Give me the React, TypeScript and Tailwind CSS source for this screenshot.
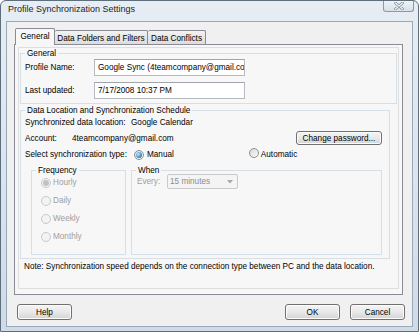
import React from "react"

function Radio({ checked, disabled }: { checked?: boolean; disabled?: boolean }) {
  return (
    <span
      className={`inline-flex h-[10px] w-[10px] shrink-0 items-center justify-center rounded-full border ${
        disabled
          ? "border-[#c9c9c9] bg-[#f3f3f3]"
          : "border-[#8f8f8f] bg-linear-to-br from-[#d9d9d9] to-[#fbfbfb]"
      }`}
    >
      {checked && (
        <span
          className={`h-[6px] w-[6px] rounded-full ${
            disabled ? "bg-[#c2c2c2]" : "bg-[radial-gradient(circle_at_35%_35%,#bfeaff,#2a7fc8_70%,#175a9a)]"
          }`}
        />
      )}
    </span>
  )
}

function Btn({ children, className = "" }: { children: React.ReactNode; className?: string }) {
  return (
    <button
      className={`flex items-center justify-center rounded-[3px] border border-[#707070] bg-linear-to-b from-[#f4f4f4] via-[#e9e9e9] to-[#d3d3d3] text-black shadow-[inset_0_0_0_1px_#fcfcfc] ${className}`}
    >
      {children}
    </button>
  )
}

function TextBox({ value }: { value: string }) {
  return (
    <div className="h-[17px] w-[151px] overflow-hidden whitespace-nowrap border border-[#b5b9c0] border-t-[#a0a4ab] bg-white pl-[3px] leading-[15px]">
      {value}
    </div>
  )
}

export default function App() {
  return (
    <div className="h-[332px] w-[419px] overflow-hidden bg-white font-['Liberation_Sans',Arial,sans-serif] text-[8.2px] leading-[11px] text-black">
      <div className="h-full w-full rounded-t-[6px] border border-[#5f6e7d] bg-linear-to-b from-[#e6edf4] via-[#dbe5ef] to-[#cfdbe7]">
        {/* barra de título */}
        <div className="flex h-[20px] items-start justify-between">
          <span className="mt-[3px] ml-[7px] text-[9px] leading-[11px] text-[#1e1e1e]">Profile Synchronization Settings</span>
          <div className="mr-[4px] flex h-[11px] w-[31px] items-center justify-center rounded-b-[3px] border-x border-b border-[#8c99a6] bg-linear-to-b from-[#eef2f6] to-[#d8e1ea]">
            <svg width="10" height="8" viewBox="0 0 10 8">
              <path d="M1.5 1 L8.5 7 M8.5 1 L1.5 7" stroke="#7b8794" strokeWidth="2.6" strokeLinecap="round" />
              <path d="M1.5 1 L8.5 7 M8.5 1 L1.5 7" stroke="#f4f6f8" strokeWidth="1.2" strokeLinecap="round" />
            </svg>
          </div>
        </div>

        {/* área cliente */}
        <div className="ml-[5px] flex h-[306px] w-[407px] flex-col border border-[#9aa9b8] bg-[#f0f0f0]">
          {/* pestañas */}
          <div className="mt-[6px] ml-[8px] flex items-end">
            <div className="relative z-10 -mb-px flex h-[17px] w-[40px] items-start justify-center rounded-t-[2px] border border-b-0 border-[#898c95] bg-[#f7f7f7] pt-[2px]">
              General
            </div>
            <div className="flex h-[14px] w-[93px] items-start justify-center rounded-t-[2px] border border-b-0 border-l-0 border-[#898c95] bg-linear-to-b from-[#f2f2f2] to-[#dcdcdc] pt-[2px]">
              Data Folders and Filters
            </div>
            <div className="flex h-[14px] w-[58px] items-start justify-center rounded-t-[2px] border border-b-0 border-l-0 border-[#898c95] bg-linear-to-b from-[#f2f2f2] to-[#dcdcdc] pt-[2px]">
              Data Conflicts
            </div>
          </div>

          {/* panel de la pestaña */}
          <div className="ml-[7px] h-[251px] w-[389px] border border-[#898c95] bg-[#f7f7f7]">
            <div className="mt-[2px] ml-[3px] flex h-[242px] w-[381px] flex-col border border-[#dedede]">
              {/* General */}
              <fieldset className="ml-[1px] w-[377px] border border-[#d5dfe5] pb-[4px] pl-[4px]">
                <legend className="px-[2px] leading-[11px]">General</legend>
                <div className="flex h-[17px] items-center">
                  <span className="w-[69px]">Profile Name:</span>
                  <TextBox value="Google Sync (4teamcompany@gmail.com)" />
                </div>
                <div className="mt-[6px] flex h-[17px] items-center">
                  <span className="w-[69px]">Last updated:</span>
                  <TextBox value="7/17/2008 10:37 PM" />
                </div>
              </fieldset>

              {/* Data Location */}
              <fieldset className="mt-[1px] ml-[1px] w-[370px] border border-[#d5dfe5] pb-[3px] pl-[4px]">
                <legend className="px-[2px] leading-[11px]">Data Location and Synchronization Schedule</legend>
                <div className="mt-[1px] flex h-[11px] items-center">
                  <span className="w-[106px]">Synchronized data location:</span>
                  <span>Google Calendar</span>
                </div>
                <div className="mt-[3px] flex h-[14px] items-center">
                  <span className="w-[47px]">Account:</span>
                  <span>4teamcompany@gmail.com</span>
                  <Btn className="mr-[7px] ml-auto h-[14px] w-[86px]">Change password...</Btn>
                </div>
                <div className="mt-[4px] flex h-[11px] items-center">
                  <span className="w-[109px]">Select synchronization type:</span>
                  <Radio checked />
                  <span className="ml-[3px]">Manual</span>
                  <span className="ml-[75px]">
                    <Radio />
                  </span>
                  <span className="ml-[2px]">Automatic</span>
                </div>
                <div className="mt-[5px] flex">
                  <fieldset className="ml-[6px] h-[90px] w-[95px] border border-[#d5dfe5] pl-[4px]">
                    <legend className="px-[2px] leading-[11px]">Frequency</legend>
                    <div className="mt-[1px] flex flex-col gap-[7px] pl-[5px] text-[#a0a0a0]">
                      {["Hourly", "Daily", "Weekly", "Monthly"].map((f, i) => (
                        <div key={f} className="flex h-[11px] items-center gap-[2px]">
                          <Radio disabled checked={i === 0} />
                          <span>{f}</span>
                        </div>
                      ))}
                    </div>
                  </fieldset>
                  <fieldset className="ml-[5px] h-[90px] w-[251px] border border-[#d5dfe5] pl-[4px]">
                    <legend className="px-[2px] leading-[11px]">When</legend>
                    <div className="-mt-[2px] flex h-[15px] items-center pl-[1px] text-[#a0a0a0]">
                      <span className="w-[30px]">Every:</span>
                      <div className="flex h-[15px] w-[71px] items-center justify-between rounded-[2px] border border-[#cacaca] bg-[#f4f4f4] pr-[4px] pl-[2px] text-[#8c8c8c]">
                        <span>15 minutes</span>
                        <svg width="6" height="4" viewBox="0 0 6 4">
                          <path d="M0 0 H6 L3 3.5 Z" fill="#a8a8a8" />
                        </svg>
                      </div>
                    </div>
                  </fieldset>
                </div>
              </fieldset>

              <p className="mt-[2px] ml-[5px] leading-[11px]">
                Note: Synchronization speed depends on the connection type between PC and the data location.
              </p>
            </div>
          </div>

          {/* botones */}
          <div className="mt-[9px] flex items-center pr-[7px] pl-[10px]">
            <Btn className="h-[16px] w-[55px]">Help</Btn>
            <Btn className="ml-auto h-[16px] w-[55px]">OK</Btn>
            <Btn className="ml-[10px] h-[16px] w-[55px]">Cancel</Btn>
          </div>
        </div>
      </div>
    </div>
  )
}
